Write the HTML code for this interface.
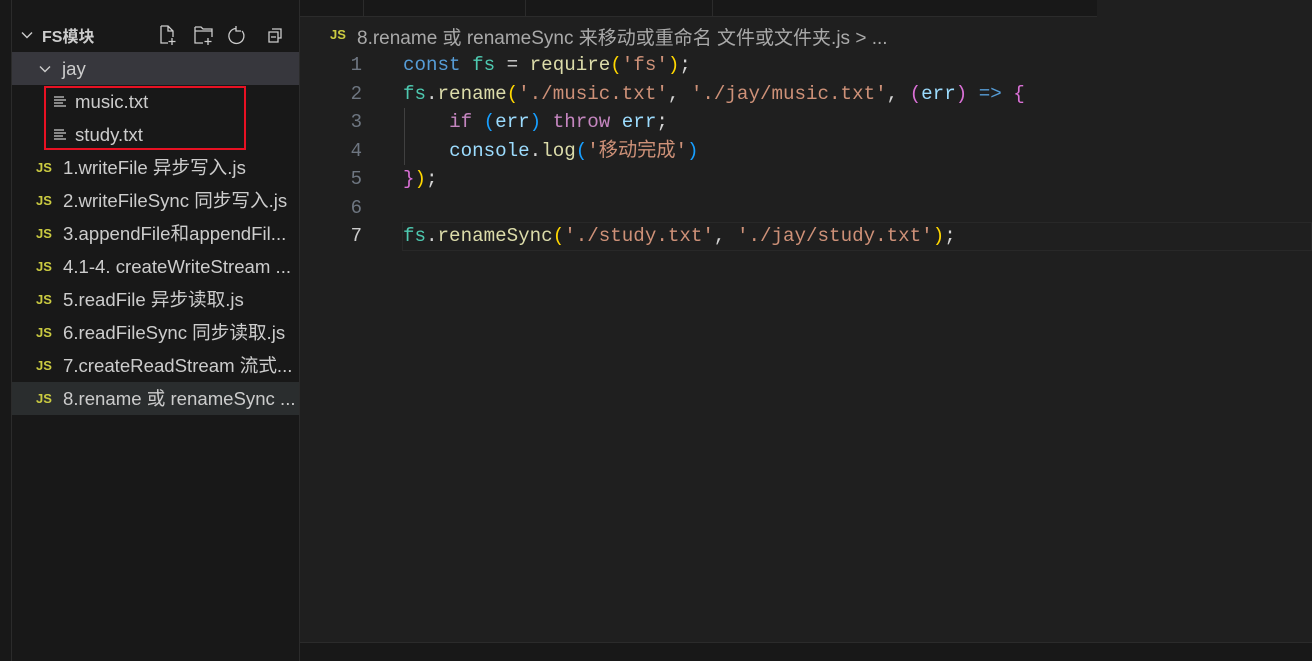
<!DOCTYPE html>
<html><head><meta charset="utf-8"><style>
*{margin:0;padding:0;box-sizing:border-box}
body{width:1312px;height:661px;background:#1f1f1f;overflow:hidden;position:relative;font-family:"Segoe UI","Liberation Sans","Noto Sans CJK SC",sans-serif;color:#cccccc}
.abs{position:absolute}
#act{left:0;top:0;width:12px;height:661px;background:#181818;border-right:1px solid #2b2b2b}
#side{left:12px;top:0;width:288px;height:661px;background:#181818;border-right:1px solid #2b2b2b}
.row{position:absolute;left:0;width:287px;height:33px;line-height:33px;font-size:18.6px;white-space:nowrap;color:#cccccc;overflow:hidden}
.js{position:absolute;left:24px;font-size:13px;font-weight:bold;color:#cbcb41;font-family:"Liberation Sans",sans-serif}
.nm{position:absolute;left:51px}
.code{font-family:"Liberation Mono","Noto Sans CJK SC",monospace;font-size:19.2px;white-space:pre;position:absolute;left:403px;line-height:28.5px}
.ln{position:absolute;width:62px;left:300px;text-align:right;font-family:"Liberation Mono",monospace;font-size:19px;color:#6e7681;line-height:28.5px}
.k{color:#569cd6}.v{color:#4ec9b0}.f{color:#dcdcaa}.s{color:#ce9178}.y{color:#ffd700}.p{color:#da70d6}.b{color:#179fff}.c{color:#c586c0}.w{color:#d4d4d4}.l{color:#9cdcfe}
</style></head><body>
<div id="act" class="abs"></div>
<div id="side" class="abs">
 <div class="abs" style="left:8px;top:24px;font-size:16px;color:#ccc">
  <svg width="14" height="14" viewBox="0 0 14 14" style="position:absolute;left:0;top:4px"><path d="M2 4.5l5 5 5-5" stroke="#ccc" stroke-width="1.4" fill="none"/></svg>
 </div>
 <div class="abs" style="left:30px;top:23px;font-size:16px;font-weight:bold;color:#ccc;font-family:'Liberation Sans','Noto Sans CJK SC',sans-serif">FS模块</div>
 <svg class="abs" style="left:146px;top:24px" width="130" height="22" viewBox="0 0 130 22" fill="none" stroke="#ccc" stroke-width="1.3">
  <path d="M3 2h7l5 5v6M3 2v17h7M10 2v5h5M14 14v7M10.5 17.5h7"/>
  <path d="M37 3h6l2 2h9v8M37 3v16h8M37 7h17M50 14v7M46.5 17.5h7"/>
  <path d="M78 4.5a7.5 7.5 0 1 0 6 2.5M78 2v5h5"/>
  <path d="M114 5h9v9h-3M111 8h9v10h-9zM113 13h5"/>
 </svg>
 <div class="row" style="top:52px;background:#37373d"><svg width="14" height="14" viewBox="0 0 14 14" style="position:absolute;left:26px;top:10px"><path d="M2 4.5l5 5 5-5" stroke="#ccc" stroke-width="1.4" fill="none"/></svg><span class="nm" style="left:50px">jay</span></div>
 <div class="row" style="top:85px"><svg width="14" height="14" viewBox="0 0 14 14" style="position:absolute;left:41px;top:10px" stroke="#ccc" stroke-width="1.3"><path d="M1 2h10M1 5h12M1 8h9M1 11h12"/></svg><span class="nm" style="left:63px">music.txt</span></div>
 <div class="row" style="top:118px"><svg width="14" height="14" viewBox="0 0 14 14" style="position:absolute;left:41px;top:10px" stroke="#ccc" stroke-width="1.3"><path d="M1 2h10M1 5h12M1 8h9M1 11h12"/></svg><span class="nm" style="left:63px">study.txt</span></div>
 <div class="abs" style="left:32px;top:86px;width:202px;height:64px;border:2px solid #e81123"></div>
 <div class="row" style="top:151px"><span class="js">JS</span><span class="nm">1.writeFile 异步写入.js</span></div>
 <div class="row" style="top:184px"><span class="js">JS</span><span class="nm">2.writeFileSync 同步写入.js</span></div>
 <div class="row" style="top:217px"><span class="js">JS</span><span class="nm">3.appendFile和appendFil...</span></div>
 <div class="row" style="top:250px"><span class="js">JS</span><span class="nm">4.1-4. createWriteStream ...</span></div>
 <div class="row" style="top:283px"><span class="js">JS</span><span class="nm">5.readFile 异步读取.js</span></div>
 <div class="row" style="top:316px"><span class="js">JS</span><span class="nm">6.readFileSync 同步读取.js</span></div>
 <div class="row" style="top:349px"><span class="js">JS</span><span class="nm">7.createReadStream 流式...</span></div>
 <div class="row" style="top:382px;background:#2a2d2e"><span class="js">JS</span><span class="nm">8.rename 或 renameSync ...</span></div>
</div>
<div class="abs" style="left:300px;top:0;width:797px;height:17px;background:#181818;border-bottom:1px solid #2b2b2b"></div>
<div class="abs" style="left:363px;top:0;width:1px;height:17px;background:#2b2b2b"></div>
<div class="abs" style="left:525px;top:0;width:1px;height:17px;background:#2b2b2b"></div>
<div class="abs" style="left:712px;top:0;width:1px;height:17px;background:#2b2b2b"></div>
<div class="abs" style="left:330px;top:27px;font-size:13px;font-weight:bold;color:#cbcb41;font-family:'Liberation Sans',sans-serif">JS</div>
<div class="abs" style="left:357px;top:23px;font-size:19px;color:#a9a9a9;white-space:nowrap">8.rename 或 renameSync 来移动或重命名 文件或文件夹.js &gt; ...</div>
<div class="ln" style="top:51px">1<br>2<br>3<br>4<br>5<br>6<br><span style="color:#ccc">7</span></div>
<div class="abs" style="left:402px;top:222px;width:910px;height:29px;border:1px solid #282828"></div>
<div class="abs" style="left:404px;top:108px;width:1px;height:57px;background:#404040"></div>
<div class="code" style="top:51px"><span class="k">const</span> <span class="v">fs</span> <span class="w">=</span> <span class="f">require</span><span class="y">(</span><span class="s">'fs'</span><span class="y">)</span><span class="w">;</span>
<span class="v">fs</span><span class="w">.</span><span class="f">rename</span><span class="y">(</span><span class="s">'./music.txt'</span><span class="w">,</span> <span class="s">'./jay/music.txt'</span><span class="w">,</span> <span class="p">(</span><span class="l">err</span><span class="p">)</span> <span class="k">=&gt;</span> <span class="p">{</span>
    <span class="c">if</span> <span class="b">(</span><span class="l">err</span><span class="b">)</span> <span class="c">throw</span> <span class="l">err</span><span class="w">;</span>
    <span class="l">console</span><span class="w">.</span><span class="f">log</span><span class="b">(</span><span class="s">'移动完成'</span><span class="b">)</span>
<span class="p">}</span><span class="y">)</span><span class="w">;</span>

<span class="v">fs</span><span class="w">.</span><span class="f">renameSync</span><span class="y">(</span><span class="s">'./study.txt'</span><span class="w">,</span> <span class="s">'./jay/study.txt'</span><span class="y">)</span><span class="w">;</span></div>
<div class="abs" style="left:300px;top:642px;width:1012px;height:19px;background:#181818;border-top:1px solid #2b2b2b"></div>
</body></html>
